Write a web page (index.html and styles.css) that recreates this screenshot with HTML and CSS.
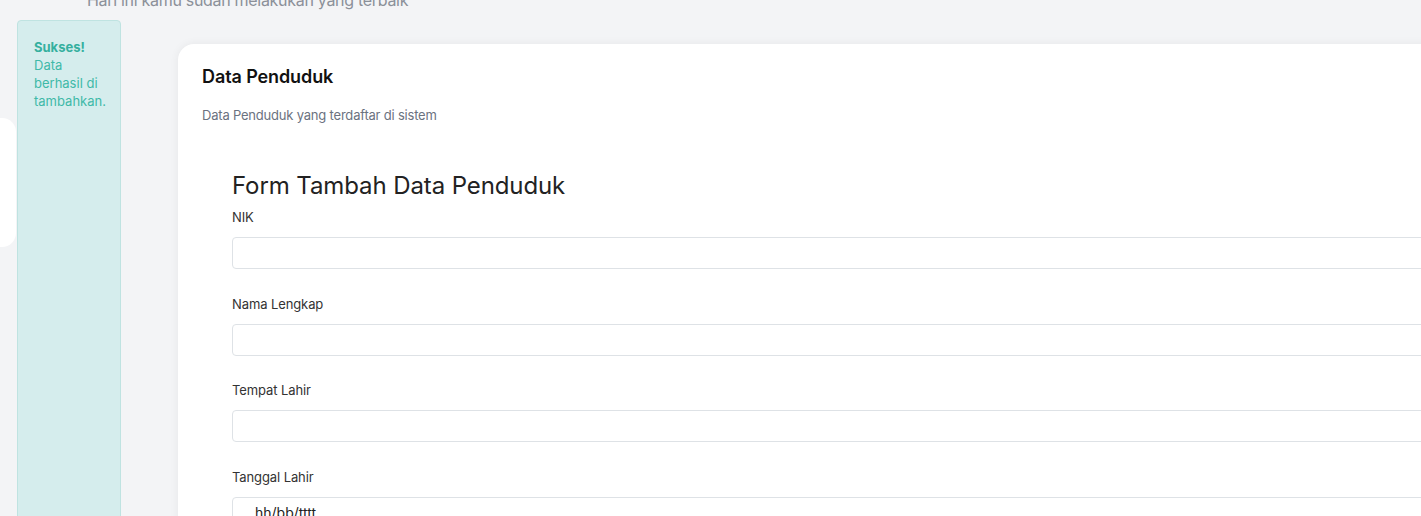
FILE: index.html
```html
<!DOCTYPE html>
<html lang="id">
<head>
<meta charset="utf-8">
<title>Data Penduduk</title>
<link rel="stylesheet" href="styles.css">
</head>
<body>
<div class="page">
  <header class="greet"><p>Hari ini kamu sudah melakukan yang terbaik</p></header>
  <div class="row">
    <div class="stub"></div>
    <div class="alert"><strong>Sukses!</strong> Data berhasil di tambahkan.</div>
    <section class="card">
      <h2 class="card-title">Data Penduduk</h2>
      <p class="card-sub">Data Penduduk yang terdaftar di sistem</p>
      <form class="form">
        <h1 class="form-title">Form Tambah Data Penduduk</h1>
        <div class="group">
          <label class="label" for="nik">NIK</label>
          <input class="input" id="nik" type="text">
        </div>
        <div class="group">
          <label class="label" for="nama">Nama Lengkap</label>
          <input class="input" id="nama" type="text">
        </div>
        <div class="group">
          <label class="label" for="tempat">Tempat Lahir</label>
          <input class="input" id="tempat" type="text">
        </div>
        <div class="group">
          <label class="label" for="tgl">Tanggal Lahir</label>
          <input class="input date" id="tgl" type="text" value="hh/bb/tttt" readonly>
        </div>
      </form>
    </section>
  </div>
</div>
</body>
</html>
```
FILE: styles.css
```css
* { box-sizing: border-box; }
html, body {
  margin: 0;
  height: 100%;
  overflow: hidden;
}
body {
  background: #f3f4f6;
  font-family: Inter, "Noto Sans", sans-serif;
  color: #222;
}
.page {
  width: 1600px;
}
.greet {
  display: flow-root;
  height: 20px;
  padding-left: 87px;
}
.greet p {
  margin: -10px 0 0;
  font-size: 16px;
  line-height: 20px;
  color: #8b9099;
  letter-spacing: -0.3px;
}
.row {
  display: flex;
  align-items: flex-start;
}
.stub {
  width: 16px;
  height: 129px;
  margin-top: 98px;
  background: #fff;
  border-radius: 0 14px 14px 0;
}
.alert {
  width: 104px;
  height: 600px;
  margin-left: 1px;
  padding: 17px 16px;
  background: #d5eded;
  border: 1px solid #bfe3e1;
  border-radius: 4px;
  color: #3fb9a8;
  font-size: 13px;
  line-height: 18px;
}
.alert strong {
  color: #35b09f;
  font-weight: 700;
}
.card {
  margin-left: 57px;
  margin-top: 24px;
  width: 1400px;
  height: 700px;
  background: #fff;
  border-radius: 16px 0 0 0;
  box-shadow: 0 0 10px rgba(0, 0, 0, 0.06);
  padding: 22px 24px;
}
.card-title {
  margin: 0;
  font-size: 18px;
  line-height: 22px;
  font-weight: 600;
  color: #111;
  letter-spacing: -0.1px;
}
.card-sub {
  margin: 17px 0 0;
  font-size: 13px;
  line-height: 20px;
  color: #6b7280;
  letter-spacing: -0.2px;
}
.form {
  padding-left: 30px;
  margin-top: 45px;
}
.form-title {
  margin: 0 0 5px;
  font-size: 24px;
  line-height: 32px;
  font-weight: 400;
  color: #222;
  letter-spacing: -0.1px;
}
.group {
  display: flex;
  flex-direction: column;
  margin-bottom: 24.5px;
}
.label {
  font-size: 13px;
  line-height: 20px;
  margin-bottom: 10px;
  color: #333;
  letter-spacing: -0.1px;
}
.input {
  height: 32px;
  width: 100%;
  border: 1px solid #dee2e6;
  border-radius: 4px;
  background: #fff;
  font-family: inherit;
  font-size: 14px;
  padding: 0 12px;
  outline: none;
}
.input.date {
  padding-left: 22px;
  color: #222;
}
```
